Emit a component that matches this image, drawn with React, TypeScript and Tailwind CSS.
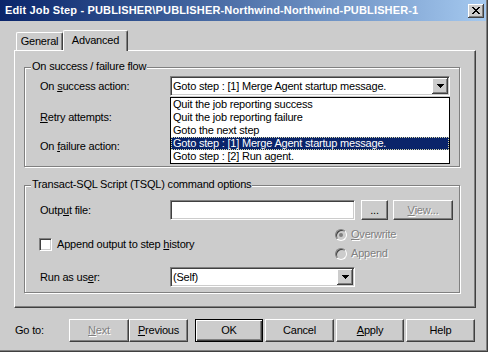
import React from "react";

const raised =
  "bg-[#cccccc] border border-white border-r-[#404040] border-b-[#404040] shadow-[inset_-1px_-1px_0_#808080]";
const sunken =
  "border border-[#808080] border-r-white border-b-white shadow-[inset_1px_1px_0_#404040,inset_-1px_-1px_0_#cccccc]";
const disabledText = "text-[#808080] [text-shadow:1px_1px_0_#ffffff]";

function U({ c }: { c: string }) {
  return <span className="underline decoration-1 underline-offset-[1px]">{c}</span>;
}

function Arrow() {
  return (
    <svg width="7" height="4" shapeRendering="crispEdges">
      <rect x="0" y="0" width="7" height="1" fill="#000" />
      <rect x="1" y="1" width="5" height="1" fill="#000" />
      <rect x="2" y="2" width="3" height="1" fill="#000" />
      <rect x="3" y="3" width="1" height="1" fill="#000" />
    </svg>
  );
}

function CloseGlyph() {
  const rows = [
    [0, 6],
    [1, 5],
    [2, 4],
    [3, 3],
    [2, 4],
    [1, 5],
    [0, 6],
  ];
  return (
    <svg width="8" height="7" shapeRendering="crispEdges">
      {rows.map(([a, b], y) => (
        <g key={y}>
          <rect x={a} y={y} width="2" height="1" fill="#000" />
          <rect x={b} y={y} width="2" height="1" fill="#000" />
        </g>
      ))}
    </svg>
  );
}

function DropButton() {
  return (
    <div className="w-[16px] h-[16px] flex items-center justify-center bg-[#cccccc] shadow-[inset_-1px_-1px_0_#404040,inset_1px_1px_0_#ffffff,inset_-2px_-2px_0_#808080]">
      <Arrow />
    </div>
  );
}

function Legend({ text }: { text: string }) {
  return (
    <span className="absolute left-[6px] -top-[8px] px-[1px] bg-[#cccccc] leading-[13px] whitespace-nowrap">
      {text}
    </span>
  );
}

const listItems = [
  "Quit the job reporting success",
  "Quit the job reporting failure",
  "Goto the next step",
  "Goto step : [1] Merge Agent startup message.",
  "Goto step : [2] Run agent.",
];

function Button({
  children,
  w,
  disabled,
}: {
  children: React.ReactNode;
  w: string;
  disabled?: boolean;
}) {
  return (
    <div
      className={`${w} h-[23px] flex items-center justify-center ${raised} ${disabled ? disabledText : ""}`}
    >
      {children}
    </div>
  );
}

export default function App() {
  return (
    <div className="relative w-[488px] h-[352px] overflow-hidden bg-[#cccccc] flex flex-col text-[11px] leading-[13px] tracking-[-0.2px] text-black font-['Liberation_Sans',Arial,sans-serif]">
      {/* Title bar */}
      <div className="h-[21px] flex items-center pl-[5px] pr-[4px] bg-linear-to-r from-[#0a246a] to-[#a6caf0]">
        <span className="flex-1 text-white text-[11px] tracking-[0.15px] font-bold whitespace-nowrap">
          {"Edit Job Step - PUBLISHER\\PUBLISHER-Northwind-Northwind-PUBLISHER-1"}
        </span>
        <div className="w-[16px] h-[14px] flex items-center justify-center bg-[#cccccc] shadow-[inset_-1px_-1px_0_#404040,inset_1px_1px_0_#ffffff,inset_-2px_-2px_0_#808080]">
          <CloseGlyph />
        </div>
      </div>

      {/* Tabs */}
      <div className="h-[29px] flex items-end pl-[16px]">
        <div className="h-[18px] w-[47px] flex items-center justify-center border-t border-l border-r border-white border-r-[#404040] rounded-t-[2px] shadow-[inset_-1px_0_0_#808080]">
          General
        </div>
        <div className="relative z-10 -mb-px h-[21px] w-[65px] pb-[2px] flex items-center justify-center bg-[#cccccc] border-t border-l border-r border-white border-r-[#404040] rounded-t-[2px] shadow-[inset_-1px_0_0_#808080]">
          Advanced
        </div>
      </div>

      {/* Tab page */}
      <div className="ml-[14px] w-[462px] h-[258px] border border-white border-r-[#404040] border-b-[#404040] shadow-[inset_-1px_-1px_0_#808080] px-[9px] pt-[16px] flex flex-col">
        {/* Group 1 */}
        <div className="relative w-[436px] h-[100px] border border-[#808080] shadow-[inset_1px_1px_0_#ffffff,1px_1px_0_#ffffff] pt-[8px] pl-[15px] flex flex-col">
          <Legend text="On success / failure flow" />
          <div className="h-[20px] flex items-center">
            <span className="w-[130px]">
              On <U c="s" />uccess action:
            </span>
            <div className={`relative w-[280px] h-[20px] bg-white ${sunken} flex items-center`}>
              <span className="flex-1 pl-[2px] whitespace-nowrap">Goto step : [1] Merge Agent startup message.</span>
              <div className="mr-px">
                <DropButton />
              </div>
              <div className="absolute z-20 -left-px top-[20px] w-[280px] bg-white border border-black flex flex-col">
                {listItems.map((t, i) => (
                  <div
                    key={t}
                    className={`h-[13px] pl-[2px] whitespace-nowrap ${
                      i === 3
                        ? "bg-[#0a246a] text-white outline-1 outline-dotted outline-[#d8d8a8] -outline-offset-1"
                        : ""
                    }`}
                  >
                    {t}
                  </div>
                ))}
              </div>
            </div>
          </div>
          <div className="mt-[11px] h-[20px] flex items-center">
            <span className="w-[130px]">
              <U c="R" />etry attempts:
            </span>
            <div className={`w-[60px] h-[20px] bg-white ${sunken}`} />
          </div>
          <div className="mt-[9px] h-[20px] flex items-center">
            <span className="w-[130px]">
              On <U c="f" />ailure action:
            </span>
            <div className={`w-[280px] h-[20px] bg-white ${sunken}`} />
          </div>
        </div>

        {/* Group 2 */}
        <div className="relative mt-[18px] w-[436px] h-[108px] border border-[#808080] shadow-[inset_1px_1px_0_#ffffff,1px_1px_0_#ffffff] pt-[14px] flex flex-col">
          <Legend text="Transact-SQL Script (TSQL) command options" />
          <div className="h-[20px] flex items-center pl-[15px]">
            <span className="w-[130px]">
              Outp<U c="u" />t file:
            </span>
            <div className={`w-[185px] h-[20px] bg-white ${sunken}`} />
            <div className={`ml-[6px] w-[27px] h-[20px] flex items-center justify-center ${raised}`}>...</div>
            <div className={`ml-[5px] w-[60px] h-[20px] flex items-center justify-center ${raised} ${disabledText}`}>
              <U c="V" />iew...
            </div>
          </div>
          <div className="h-[47px] flex">
            <div className="w-[310px] pl-[14px] pt-[18px] flex items-start">
              <div className={`w-[13px] h-[13px] bg-white ${sunken}`} />
              <span className="ml-[5px] leading-[13px]">
                Append output to step <U c="h" />istory
              </span>
            </div>
            <div className="pt-[5px] flex flex-col">
              {["Overwrite", "Append"].map((t, i) => (
                <div key={t} className="h-[19px] flex items-center">
                  <div className="w-[12px] h-[12px] rounded-full border border-[#808080] border-r-white border-b-white bg-[#cccccc] flex items-center justify-center shadow-[inset_1px_1px_0_#404040]">
                    {i === 0 && <div className="w-[4px] h-[4px] rounded-full bg-[#808080]" />}
                  </div>
                  <span className={`ml-[4px] ${disabledText}`}>
                    {i === 0 ? (
                      <>
                        <U c="O" />verwrite
                      </>
                    ) : (
                      t
                    )}
                  </span>
                </div>
              ))}
            </div>
          </div>
          <div className="h-[20px] flex items-center pl-[15px]">
            <span className="w-[130px]">
              Run as us<U c="e" />r:
            </span>
            <div className={`w-[185px] h-[20px] bg-white ${sunken} flex items-center`}>
              <span className="flex-1 pl-[2px]">(Self)</span>
              <div className="mr-px">
                <DropButton />
              </div>
            </div>
          </div>
        </div>
      </div>

      {/* Bottom buttons */}
      <div className="mt-[11px] h-[23px] flex items-center pl-[15px]">
        <span className="w-[54px]">Go to:</span>
        <Button w="w-[60px]" disabled>
          <U c="N" />ext
        </Button>
        <Button w="w-[59px]">
          <U c="P" />revious
        </Button>
        <div className="ml-[7px] w-[68px] h-[23px] flex items-center justify-center bg-[#cccccc] border border-black shadow-[inset_1px_1px_0_#ffffff,inset_-1px_-1px_0_#404040,inset_-2px_-2px_0_#808080]">
          OK
        </div>
        <div className="ml-[2px]">
          <Button w="w-[69px]">Cancel</Button>
        </div>
        <div className="ml-[2px]">
          <Button w="w-[68px]">
            <U c="A" />pply
          </Button>
        </div>
        <div className="ml-[2px]">
          <Button w="w-[69px]">Help</Button>
        </div>
      </div>

      {/* window frame right/bottom */}
      <div className="pointer-events-none absolute inset-0 shadow-[inset_-1px_-1px_0_#404040,inset_-2px_-2px_0_#808080]" />
    </div>
  );
}
